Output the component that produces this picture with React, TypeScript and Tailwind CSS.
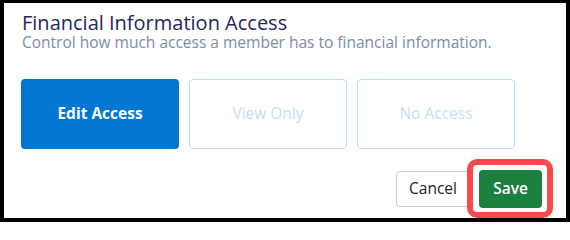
export default function App() {
  return (
    <div className="w-[570px] h-[222px] bg-black pt-[3px] px-[4px] pb-[4px] font-['Open_Sans',sans-serif]">
      <div className="h-full bg-white pl-[17px] pr-[24px] pt-[9px] flex flex-col">
        <h1 className="pl-[1px] text-[20px] leading-[22px] text-[#1c2a5e]">
          Financial Information Access
        </h1>
        <p className="pl-[1px] text-[15.5px] leading-[16px] text-[#7a8ea7]">
          Control how much access a member has to financial information.
        </p>

        <div className="mt-[29px] flex gap-[10px]">
          <button className="w-[158px] h-[70px] rounded-[4px] bg-[#0176d3] text-[15.5px] font-bold text-white">
            Edit Access
          </button>
          <button className="w-[158px] h-[70px] rounded-[4px] border border-[#bcdcf3] text-[15.5px] text-[#c3dff4]">
            View Only
          </button>
          <button className="w-[158px] h-[70px] rounded-[4px] border border-[#bcdcf3] text-[15.5px] text-[#c3dff4]">
            No Access
          </button>
        </div>

        <div className="mt-[21px] flex items-center justify-end gap-[9px]">
          <button className="w-[74px] h-[36px] rounded-[4px] border border-[#c9ccd1] text-[15.5px] text-[#222]">
            Cancel
          </button>
          <div className="relative">
            <span className="absolute -left-[12px] -right-[11px] -top-[11px] -bottom-[10px] rounded-[10px] border-[6px] border-[#f44a4a]" />
            <button className="relative w-[63px] h-[38px] rounded-[4px] bg-[#1b7f3e] text-[15.5px] font-semibold text-white">
              Save
            </button>
          </div>
        </div>
      </div>
    </div>
  );
}
